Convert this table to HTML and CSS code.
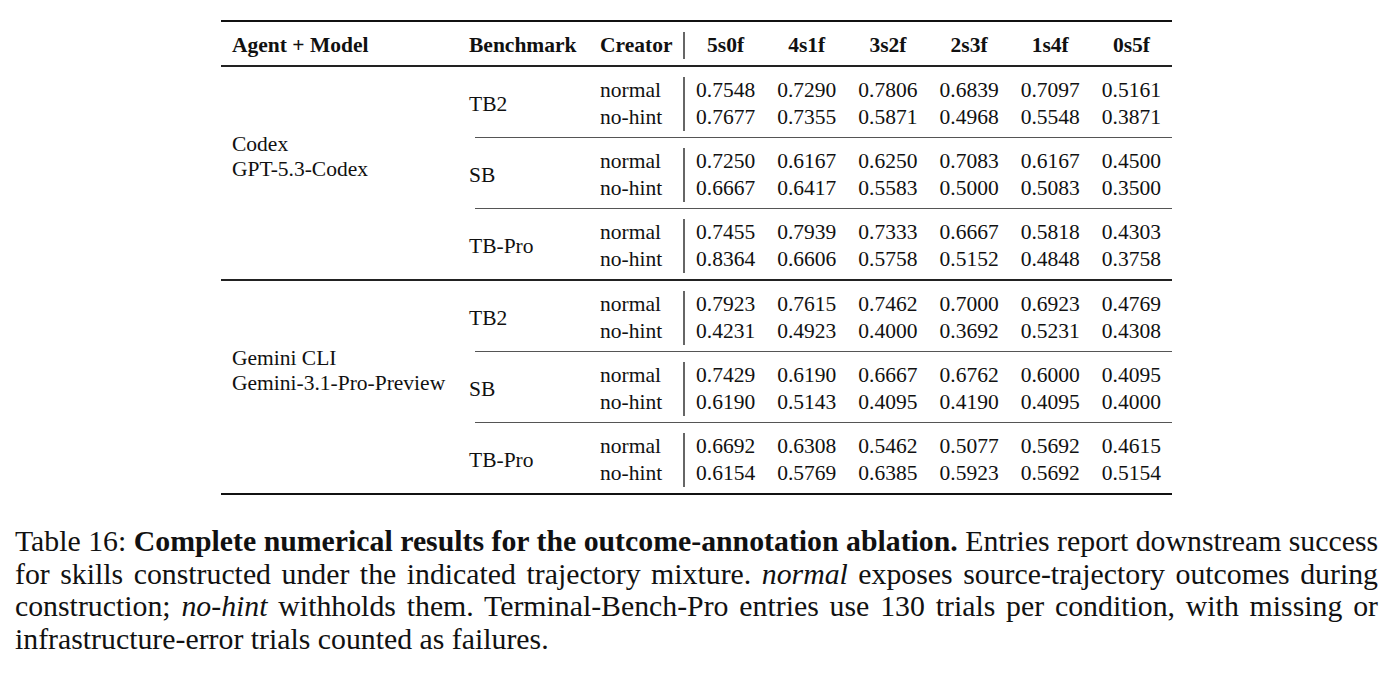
FILE: index.html
```html
<!DOCTYPE html>
<html lang="en">

<head>
    <meta charset="UTF-8">
    <title>Table 16</title>
    <link rel="stylesheet" href="styles.css">
</head>

<body>
    <div class="tbl">
        <div class="head">
            <div class="h-agent">Agent + Model</div>
            <div class="h-bench">Benchmark</div>
            <div class="h-creator">Creator</div>
            <div class="vals">
                <span>5s0f</span><span>4s1f</span><span>3s2f</span><span>2s3f</span><span>1s4f</span><span>0s5f</span>
            </div>
        </div>

        <div class="group">
            <div class="agent">Codex<br>GPT-5.3-Codex</div>
            <div class="blocks">
                <div class="block">
                    <div class="bench">TB2</div>
                    <div class="creator">normal<br>no-hint</div>
                    <div class="vals">
                        <span>0.7548</span><span>0.7290</span><span>0.7806</span><span>0.6839</span><span>0.7097</span><span>0.5161</span>
                        <span>0.7677</span><span>0.7355</span><span>0.5871</span><span>0.4968</span><span>0.5548</span><span>0.3871</span>
                    </div>
                </div>
                <div class="cmid"></div>
                <div class="block">
                    <div class="bench">SB</div>
                    <div class="creator">normal<br>no-hint</div>
                    <div class="vals">
                        <span>0.7250</span><span>0.6167</span><span>0.6250</span><span>0.7083</span><span>0.6167</span><span>0.4500</span>
                        <span>0.6667</span><span>0.6417</span><span>0.5583</span><span>0.5000</span><span>0.5083</span><span>0.3500</span>
                    </div>
                </div>
                <div class="cmid"></div>
                <div class="block">
                    <div class="bench">TB-Pro</div>
                    <div class="creator">normal<br>no-hint</div>
                    <div class="vals">
                        <span>0.7455</span><span>0.7939</span><span>0.7333</span><span>0.6667</span><span>0.5818</span><span>0.4303</span>
                        <span>0.8364</span><span>0.6606</span><span>0.5758</span><span>0.5152</span><span>0.4848</span><span>0.3758</span>
                    </div>
                </div>
            </div>
        </div>

        <div class="group">
            <div class="agent">Gemini CLI<br>Gemini-3.1-Pro-Preview</div>
            <div class="blocks">
                <div class="block">
                    <div class="bench">TB2</div>
                    <div class="creator">normal<br>no-hint</div>
                    <div class="vals">
                        <span>0.7923</span><span>0.7615</span><span>0.7462</span><span>0.7000</span><span>0.6923</span><span>0.4769</span>
                        <span>0.4231</span><span>0.4923</span><span>0.4000</span><span>0.3692</span><span>0.5231</span><span>0.4308</span>
                    </div>
                </div>
                <div class="cmid"></div>
                <div class="block">
                    <div class="bench">SB</div>
                    <div class="creator">normal<br>no-hint</div>
                    <div class="vals">
                        <span>0.7429</span><span>0.6190</span><span>0.6667</span><span>0.6762</span><span>0.6000</span><span>0.4095</span>
                        <span>0.6190</span><span>0.5143</span><span>0.4095</span><span>0.4190</span><span>0.4095</span><span>0.4000</span>
                    </div>
                </div>
                <div class="cmid"></div>
                <div class="block">
                    <div class="bench">TB-Pro</div>
                    <div class="creator">normal<br>no-hint</div>
                    <div class="vals">
                        <span>0.6692</span><span>0.6308</span><span>0.5462</span><span>0.5077</span><span>0.5692</span><span>0.4615</span>
                        <span>0.6154</span><span>0.5769</span><span>0.6385</span><span>0.5923</span><span>0.5692</span><span>0.5154</span>
                    </div>
                </div>
            </div>
        </div>
    </div>

    <div class="caption">
        <div class="line">Table 16: <b>Complete numerical results for the outcome-annotation ablation.</b> Entries report downstream success</div>
        <div class="line">for skills constructed under the indicated trajectory mixture. <i>normal</i> exposes source-trajectory outcomes during</div>
        <div class="line">construction; <i>no-hint</i> withholds them. Terminal-Bench-Pro entries use 130 trials per condition, with missing or</div>
        <div class="line last">infrastructure-error trials counted as failures.</div>
    </div>
</body>

</html>
```

FILE: styles.css
```css
* {
    padding: 0;
    margin: 0;
    box-sizing: border-box;
}

body {
    font-family: "Liberation Serif", "Times New Roman", serif;
    color: #111;
    background: #fff;
}

/* table */
.tbl {
    margin: 20px 0 0 221px;
    width: 951px;
    border-top: 2px solid #111;
    border-bottom: 2px solid #111;
    font-size: 21.5px;
    line-height: 27px;
}

.head {
    display: grid;
    grid-template-columns: 237px 131px 95px 1fr;
    padding: 10px 0 6px;
    border-bottom: 2px solid #222;
    font-weight: bold;
}

.h-agent,
.h-bench,
.h-creator {
    padding-left: 11px;
}

.vals {
    display: grid;
    grid-template-columns: repeat(6, 1fr);
    text-align: center;
    border-left: 2px solid #666;
    margin-left: -1px;
}

.group {
    display: grid;
    grid-template-columns: 237px 1fr;
}

.group + .group {
    border-top: 2px solid #222;
}

.agent {
    padding: 65px 0 0 11px;
    line-height: 25px;
}

.block {
    display: grid;
    grid-template-columns: 131px 95px 1fr;
    align-items: center;
    height: 70px;
    padding: 10px 0 6px;
}

.bench,
.creator {
    padding-left: 11px;
}

.cmid {
    height: 1px;
    margin-left: 17px;
    background: #555;
}

/* caption */
.caption {
    margin: 30px 0 0 15px;
    width: 1363px;
    font-size: 29.8px;
    line-height: 32.5px;
    color: #111;
}

.caption .line {
    text-align: justify;
    text-align-last: justify;
    white-space: nowrap;
}

.caption .last {
    text-align-last: left;
}
```
